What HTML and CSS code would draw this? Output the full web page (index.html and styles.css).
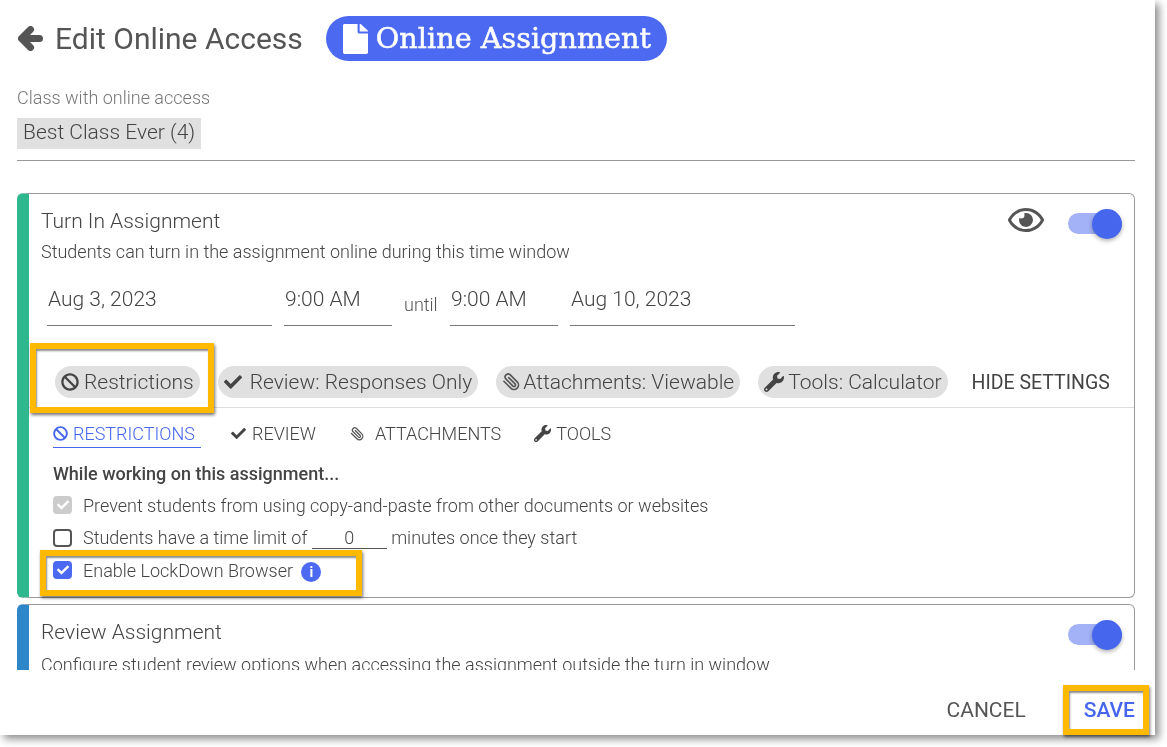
FILE: index.html
```html
<!DOCTYPE html>
<html lang="en">
<head>
<meta charset="utf-8">
<title>Edit Online Access</title>
<link rel="stylesheet" href="styles.css">
</head>
<body>
<svg class="defs" width="0" height="0" aria-hidden="true">
  <symbol id="i-arrow" viewBox="0 0 25 25"><path class="sk-arrow" d="M12.5 3.5 L3.5 12.5 L12.5 21.5 M4.5 12.5 H21.5"/></symbol>
  <symbol id="i-file" viewBox="0 0 384 512" preserveAspectRatio="none"><path d="M224 136V0H24C10.7 0 0 10.7 0 24v464c0 13.3 10.7 24 24 24h336c13.3 0 24-10.7 24-24V160H248c-13.2 0-24-10.8-24-24zm160-14.1v6.1H256V0h6.1c6.4 0 12.5 2.5 17 7l97.9 98c4.5 4.5 7 10.6 7 16.9z"/></symbol>
  <symbol id="i-ban" viewBox="0 0 512 512"><path d="M256 8C119.034 8 8 119.033 8 256s111.034 248 248 248 248-111.034 248-248S392.967 8 256 8zm130.108 117.892c65.448 65.448 70 165.481 20.677 235.637L150.47 105.216c70.204-49.356 170.226-44.735 235.638 20.676zM125.892 386.108c-65.448-65.448-70-165.481-20.677-235.637L361.53 406.784c-70.203 49.356-170.226 44.736-235.638-20.676z"/></symbol>
  <symbol id="i-check" viewBox="0 0 512 512"><path d="M173.898 439.404l-166.4-166.4c-9.997-9.997-9.997-26.206 0-36.204l36.203-36.204c9.997-9.998 26.207-9.998 36.204 0L192 312.69 432.095 72.596c9.997-9.997 26.207-9.997 36.204 0l36.203 36.204c9.997 9.997 9.997 26.206 0 36.204l-294.4 294.401c-9.998 9.997-26.207 9.997-36.204-.001z"/></symbol>
  <symbol id="i-clip" viewBox="0 0 24 24"><path class="sk-clip" transform="translate(24 0) scale(-1 1)" d="M21.44 11.05l-9.19 9.19a6 6 0 0 1-8.49-8.49l9.19-9.19a4 4 0 0 1 5.66 5.66l-9.2 9.19a2 2 0 0 1-2.83-2.83l8.49-8.48"/></symbol>
  <symbol id="i-wrench" viewBox="0 0 512 512"><path d="M507.73 109.1c-2.24-9.03-13.54-12.09-20.12-5.51l-74.36 74.36-67.88-11.31-11.31-67.88 74.36-74.36c6.62-6.62 3.43-17.9-5.66-20.16-47.38-11.74-99.55.91-136.58 37.93-39.64 39.64-50.55 97.1-34.05 147.2L18.74 402.76c-24.99 24.99-24.99 65.51 0 90.5 24.99 24.99 65.51 24.99 90.5 0l213.21-213.21c50.12 16.71 107.47 5.68 147.37-34.22 37.07-37.07 49.7-89.32 37.91-136.73zM64 472c-13.25 0-24-10.75-24-24 0-13.26 10.75-24 24-24s24 10.74 24 24c0 13.25-10.75 24-24 24z"/></symbol>
  <symbol id="i-eye" viewBox="0 0 576 512"><path d="M288 144a110.94 110.94 0 0 0-31.24 5 55.4 55.4 0 0 1 7.24 27 56 56 0 0 1-56 56 55.4 55.4 0 0 1-27-7.24A111.71 111.71 0 1 0 288 144zm284.52 97.4C518.29 135.59 410.93 64 288 64S57.68 135.64 3.48 241.41a32.35 32.35 0 0 0 0 29.19C57.71 376.41 165.07 448 288 448s230.32-71.64 284.52-177.41a32.35 32.35 0 0 0 0-29.19zM288 400c-98.65 0-189.09-55-237.93-144C98.91 167 189.34 112 288 112s189.09 55 237.93 144C477.1 345 386.66 400 288 400z"/></symbol>
</svg>

<main class="dialog">
  <div class="scroll">
    <header class="head">
      <svg class="ic back"><use href="#i-arrow"/></svg>
      <h1 class="title">Edit Online Access</h1>
      <span class="badge"><svg class="ic badge-ic"><use href="#i-file"/></svg>Online Assignment</span>
    </header>

    <div class="class-label">Class with online access</div>
    <div class="class-chip">Best Class Ever (4)</div>
    <hr class="rule">

    <section class="card card-green">
      <div class="card-top">
        <div class="card-title">Turn In Assignment</div>
        <div class="card-actions">
          <svg class="ic eye"><use href="#i-eye"/></svg>
          <span class="switch"><span class="knob"></span></span>
        </div>
      </div>
      <p class="card-sub">Students can turn in the assignment online during this time window</p>

      <div class="dates">
        <span class="field f-date">Aug 3, 2023</span>
        <span class="field f-time">9:00 AM</span>
        <span class="until">until</span>
        <span class="field f-time">9:00 AM</span>
        <span class="field f-date">Aug 10, 2023</span>
      </div>

      <div class="chips">
        <span class="chip"><svg class="ic ci"><use href="#i-ban"/></svg>Restrictions</span>
        <span class="chip"><svg class="ic ci ci-check"><use href="#i-check"/></svg>Review: Responses Only</span>
        <span class="chip"><svg class="ic ci ci-clip"><use href="#i-clip"/></svg>Attachments: Viewable</span>
        <span class="chip"><svg class="ic ci ci-wrench"><use href="#i-wrench"/></svg>Tools: Calculator</span>
        <span class="hide">HIDE SETTINGS</span>
      </div>

      <nav class="tabs">
        <span class="tab active"><svg class="ic ti"><use href="#i-ban"/></svg>RESTRICTIONS</span>
        <span class="tab tab-review"><svg class="ic ti"><use href="#i-check"/></svg>REVIEW</span>
        <span class="tab tab-attach"><svg class="ic ti ti-clip"><use href="#i-clip"/></svg>ATTACHMENTS</span>
        <span class="tab tab-tools"><svg class="ic ti ti-wrench"><use href="#i-wrench"/></svg>TOOLS</span>
      </nav>

      <div class="opts">
        <div class="opts-head">While working on this assignment...</div>
        <div class="opt"><span class="box box-disabled"><svg class="ic tick"><use href="#i-check"/></svg></span>Prevent students from using copy-and-paste from other documents or websites</div>
        <div class="opt"><span class="box"></span>Students have a time limit of <span class="mins">0</span> minutes once they start</div>
        <div class="opt"><span class="box box-on"><svg class="ic tick"><use href="#i-check"/></svg></span>Enable LockDown Browser <span class="info">i</span></div>
      </div>
    </section>

    <section class="card card-blue">
      <div class="card-top">
        <div class="card-title">Review Assignment</div>
        <div class="card-actions">
          <span class="switch"><span class="knob"></span></span>
        </div>
      </div>
      <p class="card-sub">Configure student review options when accessing the assignment outside the turn in window</p>
    </section>
  </div>

  <footer class="foot">
    <span class="btn">CANCEL</span>
    <span class="btn btn-save">SAVE</span>
  </footer>

  <div class="mark mark-a"></div>
  <div class="mark mark-b"></div>
  <div class="mark mark-c"></div>
</main>
</body>
</html>
```

FILE: styles.css
```css
* { box-sizing: border-box; }
html, body { margin: 0; height: 100%; background: #fff; overflow: hidden; }
body { font-family: Roboto, "Liberation Sans", sans-serif; color: #555; }
.defs { position: absolute; }
.ic { fill: currentColor; display: block; flex: none; }
.sk-arrow { fill: none; stroke: #555; stroke-width: 7; stroke-linecap: round; stroke-linejoin: round; }
.sk-clip { fill: none; stroke: #555; stroke-width: 2.2; stroke-linecap: round; stroke-linejoin: round; }

.dialog {
  position: relative;
  width: 1155px;
  height: 735px;
  background: #fff;
  box-shadow: 4px 4px 8px rgba(0,0,0,.45);
  display: flex;
  flex-direction: column;
}
.scroll { height: 670px; overflow: hidden; padding: 16px 20px 0 17px; will-change: transform; }

.head { display: flex; align-items: center; height: 45px; }
.back { width: 25px; height: 25px; margin: 0 12px 0 1px; }
.title { margin: 0; font-weight: 400; font-size: 30px; color: #555; }
.badge {
  display: flex; align-items: center;
  margin-left: 23px; height: 45px; padding: 0 16px 0 17px;
  background: #4c69f2; color: #fff; border-radius: 23px;
  font-family: "DejaVu Serif", "Liberation Serif", serif; font-size: 28.7px; line-height: 45px;
  -webkit-text-stroke: .5px #fff;
}
.badge-ic { width: 25px; height: 30px; margin-right: 8px; }

.class-label { margin-top: 27px; font-size: 18px; font-weight: 300; line-height: 20px; color: #777; }
.class-chip {
  display: inline-block; margin-top: 10px; padding: 0 6px;
  height: 31px; line-height: 29px; background: #e0e0e0;
  font-size: 21px; font-weight: 300; color: #444;
}
.rule { margin: 11px 0 0; border: 0; border-top: 1px solid #999; }

.card {
  margin-top: 32px; border: 1px solid #999; border-left: 12px solid; border-radius: 6px;
  padding: 0 12px 0 12px;
}
.card-green { border-left-color: #2fb78d; height: 405px; }
.card-blue { border-left-color: #2d86c8; margin-top: 6px; height: 120px; }
.card-top { display: flex; justify-content: space-between; align-items: center; height: 58px; }
.card-title { font-size: 21px; font-weight: 300; color: #444; margin-bottom: 4px; }
.card-actions { display: flex; align-items: center; }
.eye { width: 36px; height: 32px; margin: 0 24px 6px 0; }
.switch { position: relative; display: block; width: 54px; height: 21px; border-radius: 11px; background: #a3b2f7; }
.knob { position: absolute; right: 0; top: -4px; width: 30px; height: 30px; border-radius: 50%; background: #4766ee; box-shadow: 0 2px 4px rgba(0,0,0,.3); }
.card-sub { margin: -10px 0 0; font-size: 18px; font-weight: 300; line-height: 20px; color: #444; }
.card-blue .card-sub { margin-top: -8px; }

.dates { display: flex; align-items: flex-end; margin-top: 17px; padding-left: 6px; height: 47px; }
.field { height: 47px; line-height: 41px; border-bottom: 1px solid #777; font-size: 21px; font-weight: 300; padding-left: 1px; color: #444; }
.f-date { width: 225px; }
.f-time { width: 108px; margin-left: 12px; }
.until { width: 58px; padding-left: 12px; font-size: 18px; font-weight: 300; line-height: 42px; }
.until + .f-time { margin-left: 0; }
.f-time + .f-date { margin-left: 12px; }

.chips { display: flex; align-items: center; gap: 18px; margin: 40px 0 0 14px; height: 32px; }
.chip {
  display: flex; align-items: center; height: 32px; padding: 0 6px; border-radius: 16px;
  background: #e0e0e0; font-size: 21px; font-weight: 300; color: #444; white-space: nowrap;
}
.ci { width: 18px; height: 18px; margin-right: 5px; }
.ci-check { margin-right: 8px; }
.ci-clip { margin-right: 3px; }
.ci-wrench { width: 20px; height: 20px; margin-right: 4px; }
.hide { margin-left: 6px; font-size: 19.5px; font-weight: 400; color: #444; white-space: nowrap; }

.tabs {
  display: flex; height: 41px; margin: 9px -12px 0 -12px; padding-left: 24px;
  border-top: 1px solid #ddd;
}
.tab { display: flex; align-items: center; gap: 5px; padding-top: 12px; height: 40px; font-size: 18px; font-weight: 300; color: #444; border-bottom: 1px solid transparent; }
.tab.active { color: #4766ee; border-bottom-color: #4766ee; padding-right: 6px; }
.tab-review { margin-left: 30px; gap: 6px; }
.tab-attach { margin-left: 34px; gap: 11px; }
.tab-tools { margin-left: 33px; }
.ti { width: 15px; height: 15px; }
.ti-clip { width: 14px; height: 16px; }
.ti-wrench { width: 17px; height: 17px; }

.opts { margin: 16px 0 0 12px; font-size: 18px; font-weight: 300; color: #444; }
.opts-head { font-weight: 500; line-height: 20px; }
.opt { display: flex; align-items: center; height: 32.5px; white-space: pre-wrap; }
.opts-head + .opt { margin-top: 5px; }
.box { width: 19px; height: 18px; margin-right: 11px; border: 2px solid #555; border-radius: 4px; display: flex; align-items: center; justify-content: center; color: #fff; }
.box-disabled { background: #ccc; border-color: #ccc; }
.box-on { background: #4c69f2; border-color: #4c69f2; }
.tick { width: 12px; height: 12px; }
.mins { display: inline-block; width: 75px; text-align: center; border-bottom: 1px solid #555; line-height: 21px; }
.info {
  display: inline-block; width: 20px; height: 20px; margin: 3px 0 0 4px; border-radius: 50%;
  background: #4c69f2; color: #fff; text-align: center; font: 700 14px/20px Roboto, sans-serif;
}

.foot { display: flex; justify-content: flex-end; align-items: center; gap: 58px; height: 65px; padding: 15px 20px 0 0; will-change: transform; }
.btn { font-size: 21px; font-weight: 400; color: #555; }
.btn-save { color: #4766ee; font-weight: 500; }

.mark { position: absolute; border: 6px solid #ffb900; box-shadow: 1px 2px 3px rgba(0,0,0,.55), inset 1px 2px 2px rgba(0,0,0,.45); }
.mark-a { left: 30px; top: 343px; width: 184px; height: 70px; }
.mark-b { left: 40px; top: 550px; width: 322px; height: 46px; }
.mark-c { left: 1063px; top: 685px; width: 86px; height: 50px; }
```
